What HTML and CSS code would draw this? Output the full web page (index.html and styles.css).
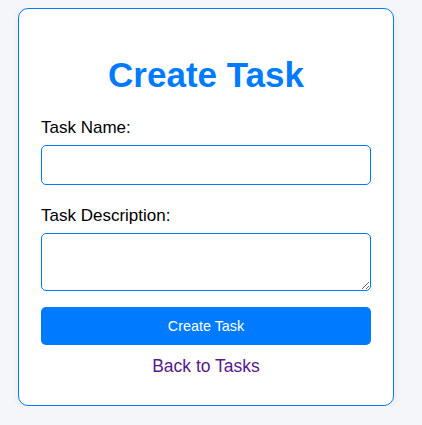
FILE: index.html
```html
<!DOCTYPE html>
<html lang="en">
<head>
<meta charset="utf-8">
<title>Create Task</title>
<link rel="stylesheet" href="styles.css">
</head>
<body>
<div class="card">
  <h1 class="title">Create Task</h1>
  <form class="form">
    <label class="label" for="name">Task Name:</label>
    <input class="field" type="text" id="name">
    <label class="label" for="desc">Task Description:</label>
    <textarea class="field area" id="desc"></textarea>
    <button class="btn" type="button">Create Task</button>
  </form>
  <a class="back" href="#">Back to Tasks</a>
</div>
</body>
</html>
```

FILE: styles.css
```css
html, body {
  background: #f4f6f9;
}
body {
  margin: 8px;
  font-family: "Liberation Sans", Arial, sans-serif;
  font-size: 17px;
  line-height: 20px;
  color: #000;
}
.card {
  box-sizing: border-box;
  margin-left: 10px;
  width: 376px;
  height: 398px;
  padding: 46px 22px 0;
  background: #fff;
  border: 1px solid #007bff;
  border-radius: 10px;
  box-shadow: 0 2px 10px rgba(0, 0, 0, 0.06);
  display: flex;
  flex-direction: column;
}
.title {
  margin: 0 0 23px;
  font-size: 35px;
  line-height: 40px;
  font-weight: bold;
  color: #007bff;
  text-align: center;
}
.form {
  display: flex;
  flex-direction: column;
}
.label {
  display: block;
  margin-bottom: 6.5px;
}
.field {
  box-sizing: border-box;
  width: 100%;
  height: 40px;
  margin: 0 0 21.5px;
  padding: 8px 10px;
  border: 1px solid #007bff;
  border-radius: 5px;
  font-family: inherit;
  font-size: 16px;
  background: #fff;
  outline: none;
}
.area {
  height: 58px;
  margin-bottom: 16px;
  display: block;
}
.btn {
  box-sizing: border-box;
  width: 100%;
  height: 38.5px;
  border: none;
  border-radius: 5px;
  background: #007bff;
  color: #fff;
  font-family: "Liberation Sans", Arial, sans-serif;
  font-size: 14.4px;
  padding: 0;
}
.back {
  margin-top: 11px;
  align-self: center;
  color: #551a8b;
  font-size: 17.5px;
  text-decoration: none;
}
```
